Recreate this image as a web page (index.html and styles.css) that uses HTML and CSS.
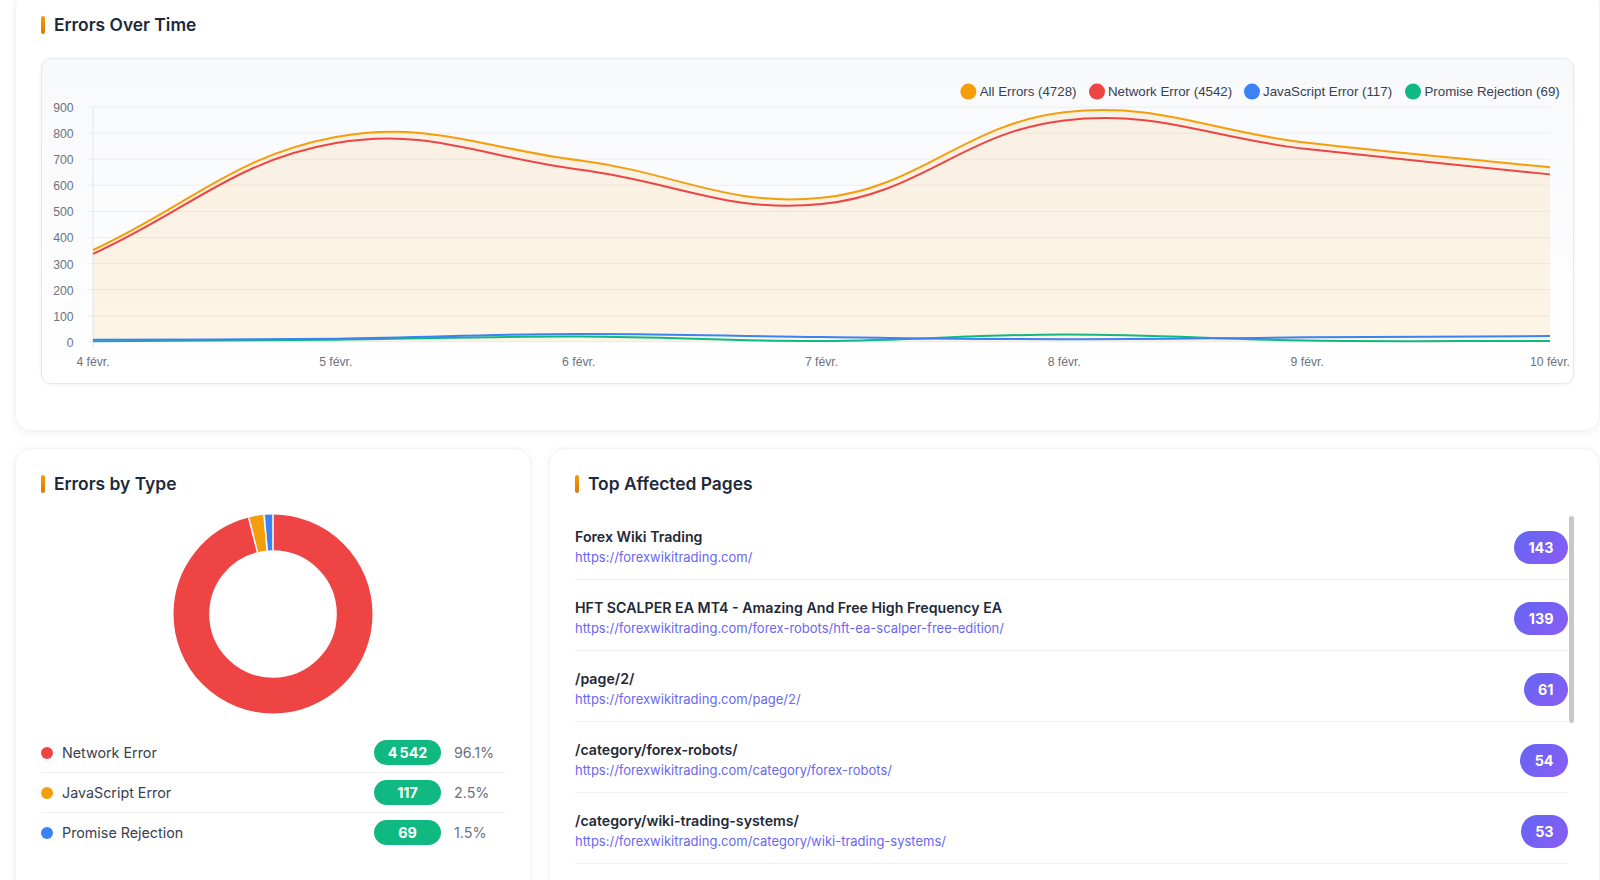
FILE: index.html
```html
<!DOCTYPE html>
<html lang="fr">
<head>
  <meta charset="UTF-8" />
  <title>Error Monitoring – Dashboard</title>
  <link rel="stylesheet" href="styles.css">
</head>
<body>

<div class="page">

  <!-- Verlauf der Fehler -->
  <section class="card card-timeline">
    <h2 class="card-title">Errors Over Time</h2>
    <div class="chart-box">
      <svg class="timeline" width="1531" height="324" viewBox="42 59 1531 324">
        <g class="grid">
          <line x1="87" x2="1550" y1="107.1" y2="107.1" />
          <line x1="87" x2="1550" y1="133.18" y2="133.18" />
          <line x1="87" x2="1550" y1="159.25" y2="159.25" />
          <line x1="87" x2="1550" y1="185.33" y2="185.33" />
          <line x1="87" x2="1550" y1="211.41" y2="211.41" />
          <line x1="87" x2="1550" y1="237.49" y2="237.49" />
          <line x1="87" x2="1550" y1="263.57" y2="263.57" />
          <line x1="87" x2="1550" y1="289.64" y2="289.64" />
          <line x1="87" x2="1550" y1="315.72" y2="315.72" />
          <line x1="87" x2="1550" y1="341.8" y2="341.8" />
        </g>
        <line class="axis" x1="93" x2="93" y1="107.1" y2="348" />

        <g class="tick-labels y-labels">
          <text x="73.5" y="112">900</text>
          <text x="73.5" y="138.1">800</text>
          <text x="73.5" y="164.2">700</text>
          <text x="73.5" y="190.2">600</text>
          <text x="73.5" y="216.3">500</text>
          <text x="73.5" y="242.4">400</text>
          <text x="73.5" y="268.5">300</text>
          <text x="73.5" y="294.5">200</text>
          <text x="73.5" y="320.6">100</text>
          <text x="73.5" y="346.7">0</text>
        </g>
        <g class="tick-labels x-labels">
          <text x="93" y="365.5">4 févr.</text>
          <text x="335.8" y="365.5">5 févr.</text>
          <text x="578.7" y="365.5">6 févr.</text>
          <text x="821.5" y="365.5">7 févr.</text>
          <text x="1064.3" y="365.5">8 févr.</text>
          <text x="1307.2" y="365.5">9 févr.</text>
          <text x="1550" y="365.5">10 févr.</text>
        </g>

        <path id="fillAll" class="fill-all" d="" />
        <path id="linePromise" class="line line-promise" d="" />
        <path id="lineJs" class="line line-js" d="" />
        <path id="lineNetwork" class="line line-network" d="" />
        <path id="lineAll" class="line line-all" d="" />

        <g class="legend">
          <circle cx="968.4" cy="91.6" r="8" fill="#f59e0b" />
          <text x="979.7" y="96.2">All Errors (4728)</text>
          <circle cx="1097" cy="91.6" r="8" fill="#ef4444" />
          <text x="1108" y="96.2">Network Error (4542)</text>
          <circle cx="1252" cy="91.6" r="8" fill="#3b82f6" />
          <text x="1263" y="96.2">JavaScript Error (117)</text>
          <circle cx="1413" cy="91.6" r="8" fill="#10b981" />
          <text x="1424.5" y="96.2">Promise Rejection (69)</text>
        </g>
      </svg>
    </div>
  </section>

  <div class="bottom-row">

    <!-- Fehler nach Typ -->
    <section class="card">
      <h2 class="card-title">Errors by Type</h2>
      <div class="donut-wrap">
        <svg class="donut" width="200" height="200" viewBox="0 0 200 200">
          <g transform="rotate(-90 100 100)">
            <circle cx="100" cy="100" r="81.65" stroke="#ef4444" stroke-dasharray="492.84 513.02" stroke-dashoffset="0" />
            <circle cx="100" cy="100" r="81.65" stroke="#f59e0b" stroke-dasharray="12.7 513.02" stroke-dashoffset="-492.84" />
            <circle cx="100" cy="100" r="81.65" stroke="#3b82f6" stroke-dasharray="7.49 513.02" stroke-dashoffset="-505.54" />
          </g>
          <g class="donut-gaps">
            <line x1="100" y1="36.2" x2="100" y2="0.5" />
            <line x1="84.4" y1="38.14" x2="75.66" y2="3.52" />
            <line x1="94.16" y1="36.47" x2="90.9" y2="0.92" />
          </g>
        </svg>
      </div>
      <ul class="type-list">
        <li class="type-row">
          <span class="dot dot-red"></span>
          <span class="type-name">Network Error</span>
          <span class="count-badge">4&#8239;542</span>
          <span class="pct">96.1%</span>
        </li>
        <li class="type-row">
          <span class="dot dot-amber"></span>
          <span class="type-name">JavaScript Error</span>
          <span class="count-badge">117</span>
          <span class="pct">2.5%</span>
        </li>
        <li class="type-row">
          <span class="dot dot-blue"></span>
          <span class="type-name">Promise Rejection</span>
          <span class="count-badge">69</span>
          <span class="pct">1.5%</span>
        </li>
      </ul>
    </section>

    <!-- Meistbetroffene Seiten -->
    <section class="card">
      <h2 class="card-title">Top Affected Pages</h2>
      <div class="pages-scroll">
        <ul class="pages-list">
          <li class="page-item">
            <div class="page-text">
              <div class="page-title">Forex Wiki Trading</div>
              <div class="page-url">https://forexwikitrading.com/</div>
            </div>
            <span class="page-count">143</span>
          </li>
          <li class="page-item">
            <div class="page-text">
              <div class="page-title">HFT SCALPER EA MT4 - Amazing And Free High Frequency EA</div>
              <div class="page-url">https://forexwikitrading.com/forex-robots/hft-ea-scalper-free-edition/</div>
            </div>
            <span class="page-count">139</span>
          </li>
          <li class="page-item">
            <div class="page-text">
              <div class="page-title">/page/2/</div>
              <div class="page-url">https://forexwikitrading.com/page/2/</div>
            </div>
            <span class="page-count">61</span>
          </li>
          <li class="page-item">
            <div class="page-text">
              <div class="page-title">/category/forex-robots/</div>
              <div class="page-url">https://forexwikitrading.com/category/forex-robots/</div>
            </div>
            <span class="page-count">54</span>
          </li>
          <li class="page-item">
            <div class="page-text">
              <div class="page-title">/category/wiki-trading-systems/</div>
              <div class="page-url">https://forexwikitrading.com/category/wiki-trading-systems/</div>
            </div>
            <span class="page-count">53</span>
          </li>
          <li class="page-item">
            <div class="page-text">
              <div class="page-title">/category/forex-indicators/</div>
              <div class="page-url">https://forexwikitrading.com/category/forex-indicators/</div>
            </div>
            <span class="page-count">47</span>
          </li>
        </ul>
        <div class="scroll-track"><div class="scroll-thumb"></div></div>
      </div>
    </section>

  </div>
</div>

<script src="charts.js"></script>
</body>
</html>
```

FILE: styles.css
```css
* {
  box-sizing: border-box;
}
body {
  margin: 0;
  background: #fff;
  font-family: Inter, "Noto Sans", sans-serif;
  color: #1f2937;
}
.page {
  margin-top: -11px;
  padding: 0 0 0 15px;
}

/* --- Karten --- */
.card {
  background: #fff;
  border: 1px solid #f1f3f6;
  border-radius: 16px;
  box-shadow: 0 2px 10px rgba(15, 23, 42, 0.06);
  padding: 23px 25px 46px;
}
.card-title {
  display: flex;
  align-items: center;
  margin: 0;
  font-size: 17.4px;
  line-height: 24px;
  font-weight: 600;
  color: #1e293b;
}
.card-title::before {
  content: "";
  width: 4px;
  height: 18px;
  margin-right: 9px;
  border-radius: 2px;
  background: linear-gradient(180deg, #f59e0b, #d97706);
}

/* --- Zeitverlauf --- */
.chart-box {
  margin-top: 21px;
  height: 326px;
  border: 1px solid #e5e7eb;
  border-radius: 10px;
  background: linear-gradient(180deg, #f8f9fb 0%, #ffffff 100%);
  box-shadow: 0 1px 4px rgba(0, 0, 0, 0.05);
  overflow: hidden;
}
.timeline {
  display: block;
  font-family: "Liberation Sans", Arial, sans-serif;
}
.grid line {
  stroke: #eceef1;
  stroke-width: 1;
}
.axis {
  stroke: #e3e5e8;
  stroke-width: 1;
}
.tick-labels text {
  font-size: 12.2px;
  fill: #6b7280;
}
.y-labels text {
  text-anchor: end;
}
.x-labels text {
  text-anchor: middle;
}
.legend text {
  font-size: 13.3px;
  fill: #374151;
}
.fill-all {
  fill: rgba(245, 158, 11, 0.1);
  stroke: none;
}
.line {
  fill: none;
  stroke-width: 2;
}
.line-all { stroke: #f59e0b; }
.line-network { stroke: #ef4444; }
.line-js { stroke: #3b82f6; }
.line-promise { stroke: #10b981; }

/* --- untere Reihe --- */
.bottom-row {
  display: grid;
  grid-template-columns: 516px 1fr;
  gap: 18px;
  margin-top: 17px;
}

/* --- Donut + Liste --- */
.donut-wrap {
  display: flex;
  justify-content: center;
  margin-top: 18px;
}
.donut {
  display: block;
}
.donut circle {
  fill: none;
  stroke-width: 35.7;
}
.donut-gaps line {
  stroke: #fff;
  stroke-width: 1.5;
}
.type-list {
  list-style: none;
  margin: 19px 0 0;
  padding: 0;
}
.type-row {
  display: flex;
  align-items: center;
  padding: 7px 0;
  line-height: 20px;
  font-size: 14.3px;
  border-bottom: 1px solid #f0f1f3;
}
.type-row:last-child {
  border-bottom: none;
}
.dot {
  width: 12px;
  height: 12px;
  border-radius: 50%;
  margin-right: 9px;
}
.dot-red { background: #ef4444; }
.dot-amber { background: #f59e0b; }
.dot-blue { background: #3b82f6; }
.type-name {
  flex: 1;
  color: #374151;
}
.count-badge {
  width: 67px;
  height: 25px;
  line-height: 25px;
  border-radius: 13px;
  background: #10b981;
  color: #fff;
  font-weight: 700;
  text-align: center;
}
.pct {
  width: 64px;
  padding-left: 13px;
  color: #6b7280;
}

/* --- Seitenliste --- */
.pages-scroll {
  display: flex;
  margin-top: 20px;
}
.pages-list {
  flex: 1;
  list-style: none;
  margin: 0;
  padding: 0;
  max-height: 384px;
  overflow: hidden;
}
.scroll-track {
  width: 6px;
}
.scroll-thumb {
  height: 207px;
  margin-left: 1px;
  width: 5px;
  border-radius: 3px;
  background: #c8c8c8;
}
.page-item {
  display: flex;
  align-items: center;
  justify-content: space-between;
  padding: 11px 0 12px;
  margin-bottom: 7px;
  border-bottom: 1px solid #f0f1f3;
}
.page-title {
  font-size: 14.2px;
  line-height: 20px;
  font-weight: 600;
  color: #1f2937;
}
.page-url {
  font-size: 13px;
  line-height: 20px;
  color: #6a67f1;
}
.page-count {
  padding: 6px 14.5px;
  line-height: 21px;
  border-radius: 17px;
  background: linear-gradient(135deg, #6366f1, #8b5cf6);
  color: #fff;
  font-size: 14.3px;
  font-weight: 700;
}
```

FILE: charts.js
```js
// x-Positionen der Tage (4.–10. Feb.) und Skala 0..900
const DAY_X = [93, 335.8, 578.7, 821.5, 1064.3, 1307.2, 1550];
const yOf = v => 341.8 - v * 234.7 / 900;

const series = {
  all:     [352, 785, 696, 552, 880, 763, 669],
  network: [337, 762, 661, 528, 849, 739, 642],
  js:      [8, 12, 30, 18, 10, 17, 22],
  promise: [2, 8, 20, 3, 28, 5, 3]
};

// Bezier wie bei Chart.js (tension 0.4)
function splinePath(values) {
  const pts = values.map((v, i) => ({ x: DAY_X[i], y: yOf(v) }));
  const cps = pts.map((p, i) => {
    const prev = pts[i - 1] || p;
    const next = pts[i + 1] || p;
    const d01 = Math.hypot(p.x - prev.x, p.y - prev.y);
    const d12 = Math.hypot(next.x - p.x, next.y - p.y);
    const s01 = d01 / (d01 + d12) || 0;
    const s12 = d12 / (d01 + d12) || 0;
    const fa = 0.4 * s01, fb = 0.4 * s12;
    return {
      before: { x: p.x - fa * (next.x - prev.x), y: p.y - fa * (next.y - prev.y) },
      after:  { x: p.x + fb * (next.x - prev.x), y: p.y + fb * (next.y - prev.y) }
    };
  });
  let d = `M${pts[0].x},${pts[0].y.toFixed(2)}`;
  for (let i = 1; i < pts.length; i++) {
    const a = cps[i - 1].after, b = cps[i].before;
    d += ` C${a.x.toFixed(2)},${a.y.toFixed(2)} ${b.x.toFixed(2)},${b.y.toFixed(2)} ${pts[i].x},${pts[i].y.toFixed(2)}`;
  }
  return d;
}

const allPath = splinePath(series.all);
document.getElementById('lineAll').setAttribute('d', allPath);
document.getElementById('fillAll').setAttribute('d', allPath + ' L1550,341.8 L93,341.8 Z');
document.getElementById('lineNetwork').setAttribute('d', splinePath(series.network));
document.getElementById('lineJs').setAttribute('d', splinePath(series.js));
document.getElementById('linePromise').setAttribute('d', splinePath(series.promise));
```
